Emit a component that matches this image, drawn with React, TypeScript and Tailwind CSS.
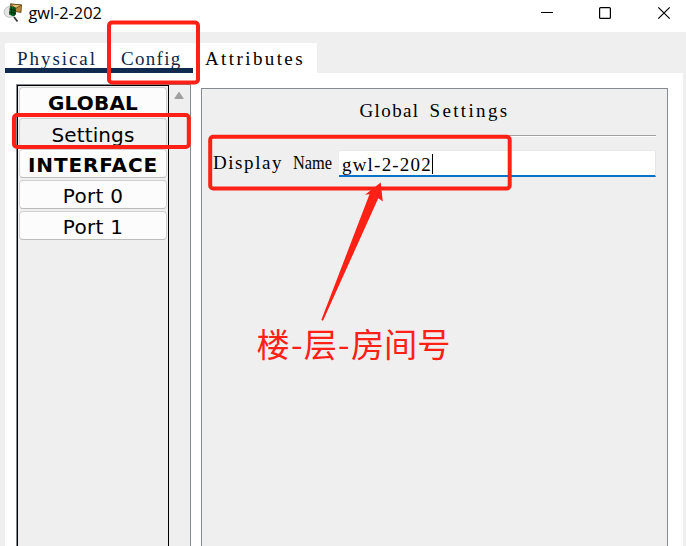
const serif = "inline-block font-['Liberation_Serif',serif] text-[19px] leading-[20px] whitespace-nowrap";

function AppIcon() {
  return (
    <svg className="ml-[3px] h-[24px] w-[20px] shrink-0" viewBox="0 0 20 24">
      <path d="M11 17 L14.5 21.5" stroke="#3a3a3a" strokeWidth="1.8" />
      <path d="M7.5 4 L18.5 5 L18 12.5 L12.5 11.5 L7 8 Z" fill="#b9873a" stroke="#5f4314" strokeWidth=".8" />
      <path d="M7.5 4 L12.5 8.5 L18.5 5 Z" fill="#e6c073" stroke="#5f4314" strokeWidth=".8" />
      <circle cx="6.5" cy="12" r="5.4" fill="#e3e6e4" stroke="#bcc2c0" />
      <path d="M7 6 L13 7.5 L13 14.5 L10.5 16.5 L6 14.5 Z" fill="#0d6420" />
      <path d="M8.5 6.5 V15 M11 7.5 V16 M6.5 9 L13 10.5 M6 12 L13 13.5" stroke="#04240a" strokeWidth=".8" />
    </svg>
  );
}

function TitleBar() {
  return (
    <header className="flex h-8 shrink-0 items-start bg-white">
      <AppIcon />
      <span className="ml-[5.5px] mt-px font-['Open_Sans',sans-serif] text-[16.3px] leading-[24px] text-black">gwl-2-202</span>
      <svg className="ml-auto h-[26px] w-[146px]" viewBox="0 0 146 26" fill="none" stroke="#000">
        <path d="M1 12.5 H13" />
        <rect x="59.6" y="7.6" width="10.8" height="10.8" rx="1" strokeWidth="1.2" />
        <path d="M118.3 7.3 L129.7 18.7 M129.7 7.3 L118.3 18.7" strokeWidth="1.2" />
      </svg>
    </header>
  );
}

function Tabs() {
  return (
    <nav className="flex h-[41px] shrink-0 pl-[5px] pt-[11px] text-[#0d2748]">
      <div className="flex w-[188px] border-b-[5px] border-[#10294f] bg-white">
        <span className={`${serif} ml-[12px] mt-[6px] w-[80px] tracking-[1.95px]`}>Physical</span>
        <span className={`${serif} ml-[24px] mt-[6px] w-[60px] tracking-[1.3px]`}>Config</span>
      </div>
      <div className="flex w-[124px] items-start bg-white pl-[12px] pt-[6px] text-black">
        <span className={`${serif} tracking-[2.4px]`}>Attributes</span>
      </div>
    </nav>
  );
}

const items = [
  { label: "GLOBAL", style: "font-bold tracking-[0.2px] bg-[#fcfcfc]" },
  { label: "Settings", style: "pt-[4px] tracking-[0.1px] bg-[#f2f2f2]" },
  { label: "INTERFACE", style: "font-bold tracking-[0.9px] bg-[#fcfcfc]" },
  { label: "Port 0", style: "tracking-[0.3px] bg-[#fcfcfc]" },
  { label: "Port 1", style: "tracking-[0.3px] bg-[#fcfcfc]" },
];

function Sidebar() {
  return (
    <aside className="mt-[11px] flex w-[175px] shrink-0 border-x border-t border-[#858992] bg-[#efefef]">
      <div className="flex w-[152px] shrink-0 flex-col gap-[2px] border-x border-t border-black px-px pt-px">
        {items.map((item) => (
          <button
            key={item.label}
            className={`flex h-[29px] shrink-0 items-center justify-center rounded-[4px] border border-[#d0d0d0] border-b-[#bcbcbc] pt-[3px] font-['DejaVu_Sans',sans-serif] text-[20px] leading-[24px] text-black ${item.style}`}
          >
            {item.label}
          </button>
        ))}
      </div>
      <svg className="ml-[5px] mt-[6px] h-[9px] w-[10px]" viewBox="0 0 10 9">
        <path d="M5 1.5 L9 7.5 H1 Z" fill="#a0a0a0" stroke="#a0a0a0" strokeWidth="1.2" strokeLinejoin="round" />
      </svg>
    </aside>
  );
}

function Settings() {
  return (
    <main className="ml-[10px] mt-[15px] w-[467px] border-x border-t border-[#858992] bg-[#efefef] px-[11px] text-black">
      <h1 className="mt-[12px] flex h-[20px] justify-center gap-[10px]">
        <span className={`${serif} w-[60px] tracking-[1.38px]`}>Global</span>
        <span className={`${serif} w-[80px] tracking-[2.34px]`}>Settings</span>
      </h1>
      <div className="mt-[14px] h-[2px] border-b border-t border-b-white border-t-[#a0a0a0]" />
      <div className="mt-[13px] flex h-[27px]">
        <label className="mt-[3px] flex w-[126px] shrink-0 gap-[10px]">
          <span className={`${serif} w-[70px] tracking-[1.56px]`}>Display</span>
          <span className={`${serif} w-[40px] origin-left scale-x-[0.86]`}>Name</span>
        </label>
        <div className="flex h-[27px] flex-1 rounded-t-[2px] border-b-2 border-r border-t border-b-[#0872c8] border-r-[#e2e6eb] border-t-[#e8e8e8] bg-white pl-[3px]">
          <span className={`${serif} mt-[4px] w-[90px] tracking-[1.2px]`}>gwl-2-202</span>
          <span className="mt-[3px] h-[20px] w-px bg-black" />
        </div>
      </div>
    </main>
  );
}

function Annotations() {
  return (
    <div className="pointer-events-none absolute inset-0">
      <svg className="absolute inset-0 h-full w-full" viewBox="0 0 686 546" fill="none" stroke="#ff2116" strokeWidth="4">
        <rect x="109" y="22.5" width="89" height="60" rx="3" />
        <rect x="14" y="115" width="174.8" height="32" rx="3" />
        <rect x="210.2" y="136.7" width="299.5" height="51.8" rx="3" />
        <path d="M380.7 182.5 L365 194.8 L369.5 194.3 L321.3 320 L323 320.8 L378.3 198.3 L382.8 201.5 Z" fill="#ff2116" stroke="none" />
      </svg>
      <div className="absolute left-[256.5px] top-[319px] whitespace-nowrap font-['Noto_Sans_CJK_SC',sans-serif] text-[33.2px] font-normal leading-[48px] text-[#ff2116]">
        楼<span className="inline-block w-[14px] text-center">-</span>层<span className="inline-block w-[14px] text-center">-</span>房间号
      </div>
    </div>
  );
}

export default function App() {
  return (
    <div className="relative flex h-[546px] w-[686px] flex-col overflow-hidden bg-[#efefef]">
      <TitleBar />
      <Tabs />
      <div className="ml-[5px] flex min-h-0 w-[678px] flex-1 bg-white pl-[11px]">
        <Sidebar />
        <Settings />
      </div>
      <Annotations />
    </div>
  );
}
